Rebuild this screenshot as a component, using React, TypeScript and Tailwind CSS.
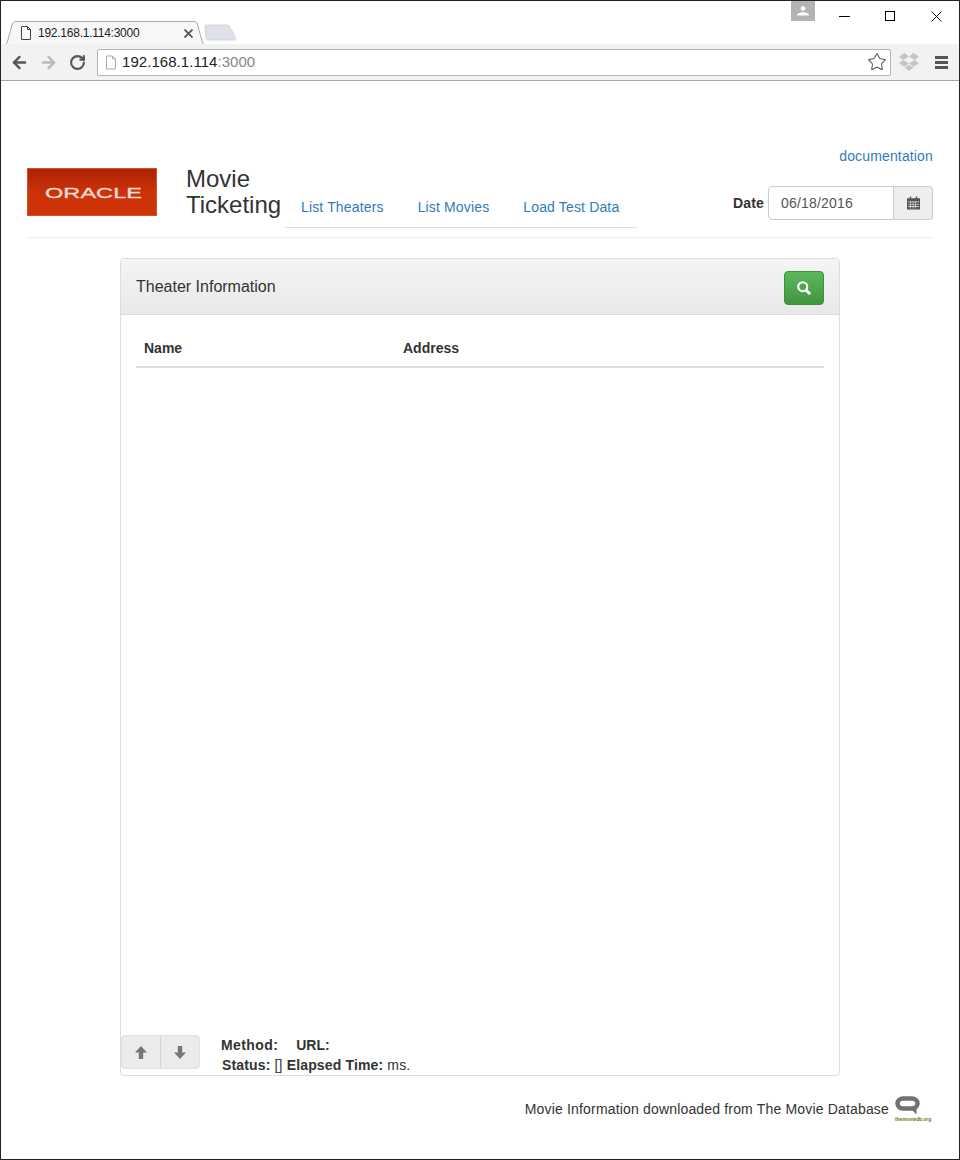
import { ArrowLeft, ArrowRight, RotateCw, Star } from "lucide-react"

const sans = "font-['Liberation_Sans',Arial,sans-serif]"

function PageIcon({ className }: { className?: string }) {
  return (
    <svg viewBox="0 0 12 14" className={className} fill="none">
      <path d="M1.5 .5h6l3 3v10h-9z" fill="#fff" stroke="currentColor" />
      <path d="M7.5 .5v3h3" stroke="currentColor" />
    </svg>
  )
}

function ChromeBar() {
  return (
    <div className="shrink-0">
      {/* Tab strip */}
      <div className="relative h-[43px] bg-white">
        <div className="absolute right-[144px] top-0 flex h-[20px] w-[24px] items-center justify-center bg-[#b3b3b3]">
          <svg viewBox="0 0 12 10" className="h-[10px] w-[12px]" fill="#fff">
            <circle cx="6" cy="2.6" r="2.4" />
            <path d="M0 9.5c0-2.4 3-3.2 6-3.2s6 .8 6 3.2z" />
          </svg>
        </div>
        <div className="absolute right-0 top-[7px] flex">
          <div className="flex h-[16px] w-[45px] items-center justify-center">
            <div className="h-px w-[11px] bg-black" />
          </div>
          <div className="flex h-[16px] w-[46px] items-center justify-center">
            <div className="h-[10px] w-[10px] border border-black" />
          </div>
          <div className="flex h-[16px] w-[46px] items-center justify-center">
            <svg viewBox="0 0 11 11" className="h-[11px] w-[11px]" stroke="#111" fill="none">
              <path d="M.5.5l10 10M10.5.5l-10 10" />
            </svg>
          </div>
        </div>
        <svg className="absolute left-0 top-[19px] h-[26px] w-[240px]" viewBox="0 0 240 26" fill="none">
          <path d="M0 24.5h3.5c1.5 0 2.300-1 2.800-2.500l5-18c.5-1.500 1.500-2.500 3.500-2.500h178c2 0 3 1 3.500 2.500l5 18c.5 1.500 1.500 2.500 3 2.500h36" fill="#f7f7f7" stroke="#a9a9a9" />
          <path d="M0 25.5h240" stroke="#a9a9a9" />
          <path d="M204 6.500c0-1 .6-1.500 1.500-1.500h21c1 0 1.700.5 2.200 1.500l5.800 11c.4 1.500-.2 2.500-1.500 2.500h-26c-1 0-1.600-.5-2-1.500z" fill="#dee1e8" stroke="#d2d5dc" />
        </svg>
        <div className={`absolute left-[19px] top-[24px] flex h-[16px] items-center ${sans}`}>
          <PageIcon className="h-[14px] w-[12px] text-[#444]" />
          <span className="ml-[6px] text-[12px] tracking-[-0.25px] text-[#222]">192.168.1.114:3000</span>
        </div>
        <svg className="absolute left-[183px] top-[28px] h-[9px] w-[9px]" viewBox="0 0 9 9" fill="none" stroke="#555" strokeWidth="1.800">
          <path d="M.5.5l8 8M8.500.5l-8 8" />
        </svg>
      </div>
      {/* Toolbar */}
      <div className={`relative flex h-[37px] items-center border-b border-[#a6a6a6] bg-[#f2f2f2] pl-[9px] pr-[10px] ${sans}`}>
        <ArrowLeft size={19} strokeWidth={3} className="text-[#555]" />
        <ArrowRight size={19} strokeWidth={3} className="ml-[10px] text-[#b8b8b8]" />
        <RotateCw size={17} strokeWidth={3} className="ml-[11px] text-[#555]" />
        <div className="ml-[11px] flex h-[27px] w-[794px] items-center rounded-[2px] border border-[#b5b5b5] bg-white pl-[7px] pr-[2px]">
          <PageIcon className="h-[15px] w-[12px] text-[#aaa]" />
          <span className="ml-[5px] text-[15px] tracking-[0.05px] text-[#222]">
            192.168.1.114<span className="text-[#888]">:3000</span>
          </span>
          <Star size={20} strokeWidth={1.25} className="ml-auto mr-[1px] text-[#555]" />
        </div>
        <svg viewBox="0 0 20 18" className="ml-[8px] h-[18px] w-[20px]" fill="#c4c4c4">
          <path d="M5.500 0L0 3.600l4.200 3.300L10 3.400zM14.500 0L10 3.400l5.800 3.500L20 3.600zM0 10.200l5.500 3.600L10 10.300 4.200 6.900zM14.500 13.800l5.500-3.600-4.200-3.300L10 10.300zM5.500 14.800L10 18l4.500-3.200L10 11.700z" />
        </svg>
        <div className="ml-[16px] flex flex-col gap-[2px]">
          <div className="h-[3px] w-[13px] bg-[#555]" />
          <div className="h-[3px] w-[13px] bg-[#555]" />
          <div className="h-[3px] w-[13px] bg-[#555]" />
        </div>
      </div>
    </div>
  )
}

function OracleLogo() {
  return (
    <div className="h-[48px] w-[130px] shrink-0 border border-[#d4512e] bg-gradient-to-b from-[#ae2305] via-[#cb3209] to-[#d13409]">
      <svg viewBox="1 1 128 46" className="h-[46px] w-[128px]">
        <text x="18" y="29.500" textLength="97" lengthAdjust="spacingAndGlyphs" fontFamily="'Liberation Sans',Arial,sans-serif" fontSize="15.500" fill="#f3d9cf" stroke="#f3d9cf" strokeWidth="0.350">
          ORACLE
        </text>
      </svg>
    </div>
  )
}

function Header() {
  return (
    <div className="h-[92px] border-b border-[#eee]">
      <div className="flex h-[22px] justify-end">
        <a className="text-[14px] leading-[20px] tracking-[0.15px] text-[#337ab7]">documentation</a>
      </div>
      <div className="flex">
        <OracleLogo />
        <div className="ml-[29px] -mt-[2px] w-[99px] text-[24px] leading-[26px] text-[#333]">Movie Ticketing</div>
        <div className="mt-[19px] flex h-[41px] w-[352px] items-center gap-[34px] border-b border-[#ddd] pl-[16px] text-[14px] tracking-[0.15px] text-[#337ab7]">
          <a>List Theaters</a>
          <a>List Movies</a>
          <a>Load Test Data</a>
        </div>
        <div className="ml-auto mt-[18px] flex h-[34px] items-center text-[14px]">
          <span className="mr-[4px] font-bold tracking-[0.15px] text-[#333]">Date</span>
          <div className="flex h-[34px] w-[165px]">
            <div className="flex w-[126px] items-center rounded-l-[4px] border border-[#ccc] px-[12px] tracking-[0.2px] text-[#555]">06/18/2016</div>
            <div className="flex flex-1 items-center justify-center rounded-r-[4px] border border-l-0 border-[#ccc] bg-[#eee]">
              <svg viewBox="0 0 14 14" className="h-[14px] w-[13px]" fill="#555">
                <path d="M0 2h3V0h1.500v2h5V0H11v2h3v12H0z" />
                <path d="M1 5.500h12v.8H1zM1 8h12v.7H1zM1 10.300h12v.7H1zM3.500 5.500h.7V13h-.7zM6.200 5.500h.7V13h-.7zM9 5.500h.7V13H9z" fill="#eee" />
              </svg>
            </div>
          </div>
        </div>
      </div>
    </div>
  )
}

function Arrow({ down }: { down?: boolean }) {
  return (
    <svg viewBox="0 0 12 13" className={`h-[13px] w-[12px] ${down ? "rotate-180" : ""}`} fill="#777">
      <path d="M6 0l6 6.500H8.200V13H3.800V6.500H0z" />
    </svg>
  )
}

function TheaterPanel() {
  return (
    <div className="mx-auto mt-[20px] flex h-[818px] w-[720px] flex-col rounded-[4px] border border-[#ddd] bg-white">
      <div className="flex h-[56px] items-center justify-between rounded-t-[4px] border-b border-[#ddd] bg-gradient-to-b from-[#f5f5f5] to-[#e8e8e8] px-[15px]">
        <span className="text-[16px] text-[#333]">Theater Information</span>
        <button className="mt-[2px] flex h-[34px] w-[40px] items-center justify-center rounded-[4px] border border-[#3e8f3e] bg-gradient-to-b from-[#5cb85c] to-[#419641]">
          <svg viewBox="0 0 14 14" className="h-[14px] w-[14px]" fill="none" stroke="#fff">
            <circle cx="5.700" cy="5.700" r="4.500" strokeWidth="2.100" />
            <path d="M8.900 8.900l4.200 4.200" strokeWidth="2.800" />
          </svg>
        </button>
      </div>
      <div className="mx-[15px] mt-[16px] grid h-[37px] grid-cols-[259px_1fr] items-center border-b-2 border-[#ddd] pl-[8px] text-[14px] font-bold text-[#333]">
        <span>Name</span>
        <span>Address</span>
      </div>
      <div className="flex-1" />
      <div className="flex h-[40px] items-start">
        <div className="flex h-[34px] w-[79px] rounded-[4px] border border-[#e0e0e0] bg-[#ebebeb]">
          <div className="flex flex-1 items-center justify-center border-r border-[#d4d4d4]">
            <Arrow />
          </div>
          <div className="flex flex-1 items-center justify-center">
            <Arrow down />
          </div>
        </div>
        <div className="ml-[21px] text-[14px] leading-[20px] text-[#333]">
          <div className="font-bold">
            <span className="tracking-[0.4px]">Method:</span>
            <span className="ml-[18px]">URL:</span>
          </div>
          <div className="ml-px tracking-[0.15px]">
            <b>Status:</b> [] <b>Elapsed Time:</b> ms.
          </div>
        </div>
      </div>
    </div>
  )
}

function Attribution() {
  return (
    <div className="mt-[20px] flex items-start justify-end pr-[1px]">
      <span className="mt-[3px] text-[14px] leading-[20px] tracking-[0.17px] text-[#333]">Movie Information downloaded from The Movie Database</span>
      <div className="ml-[6px] flex w-[37px] flex-col items-start">
        <svg viewBox="0 0 25 19" className="h-[19px] w-[25px]" fill="none">
          <path d="M8 2.500h9c3 0 5.500 2 5.500 5s-2.500 5-5.500 5H8c-3 0-5.500-2-5.500-5s2.500-5 5.500-5z" stroke="#6f7173" strokeWidth="4.500" />
          <path d="M17 14l4.500 4.500v-6z" fill="#6f7173" />
        </svg>
        <span className="mt-[1px] text-[5px] font-bold leading-[6px] tracking-[-0.1px] whitespace-nowrap text-[#6a7a10]">themoviedb.org</span>
      </div>
    </div>
  )
}

export default function App() {
  return (
    <div className={`flex h-[1160px] w-[960px] flex-col border border-[#222] bg-white ${sans}`}>
      <ChromeBar />
      <div className="px-[26px] pt-[65px]">
        <Header />
        <TheaterPanel />
        <Attribution />
      </div>
    </div>
  )
}
